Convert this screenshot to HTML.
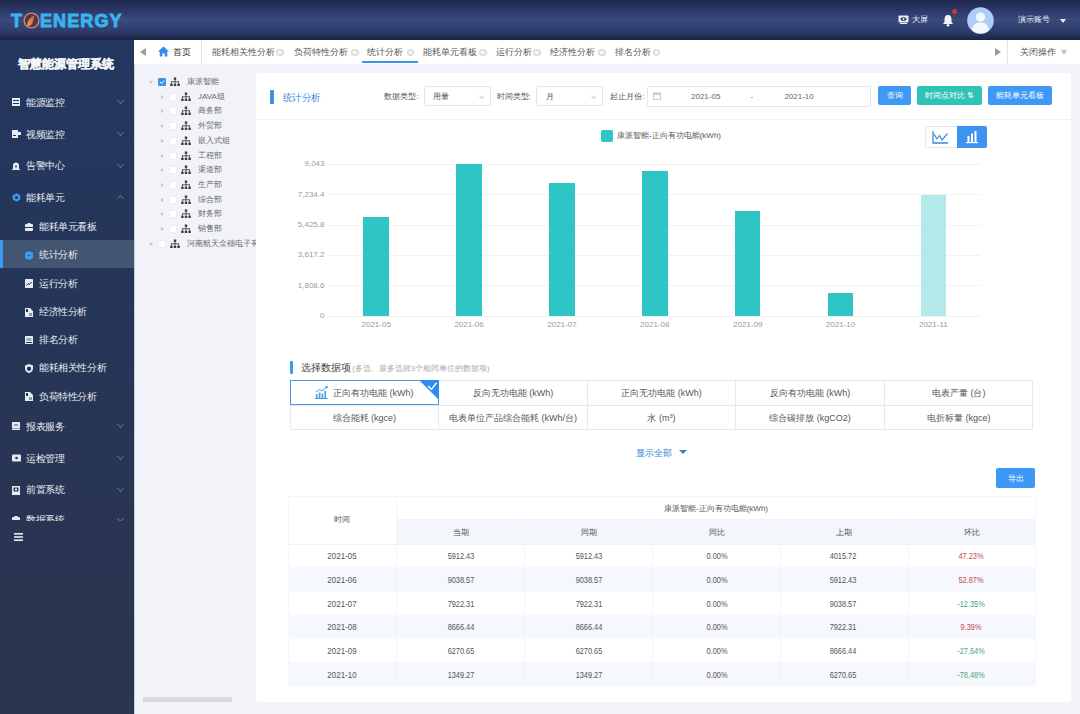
<!DOCTYPE html><html><head><meta charset="utf-8"><style>
*{margin:0;padding:0;box-sizing:border-box}
html,body{width:1080px;height:714px;overflow:hidden}
body{position:relative;background:#f2f3f8;font-family:"Liberation Sans",sans-serif;color:#333}
.a{position:absolute;white-space:nowrap}
#hdr{left:0;top:0;width:1080px;height:40px;background:linear-gradient(180deg,#1f294d 0%,#2a3866 25%,#3a4a7d 50%,#2e3c6b 78%,#1b2343 100%)}
#side{left:0;top:40px;width:134px;height:674px;background:linear-gradient(180deg,#24375e 0%,#25365a 30%,#283554 60%,#2a354f 100%)}
.mi{left:0;width:134px;height:20px;color:#e8ecf3;font-size:10px;line-height:20px}
.mi .t{top:1.2px!important;transform:scale(0.96);transform-origin:0 50%}
.mi .t{position:absolute;left:26px;top:0}
.mi svg{position:absolute;left:12px;top:6.5px}
.chev{position:absolute;left:118px;top:6.5px;width:5px;height:5px;border-right:1px solid #5d6d8c;border-bottom:1px solid #5d6d8c;transform:rotate(45deg)}
.chev.up{transform:rotate(-135deg);top:9px}
.si .t{left:39px}
.si svg{left:25px}
#tabs{left:134px;top:40px;width:946px;height:24px;background:#fff}
.tab{top:40px;height:24px;line-height:24px;font-size:9px;color:#555}
.x{position:absolute;top:8.5px;width:7.5px;height:7.5px;border-radius:50%;border:1px solid #cfcfcf;background:#ececec}
.x:after{content:'';position:absolute;left:1.2px;top:1.2px;width:3px;height:3px;border-radius:50%;background:#fafafa}
#card{left:256px;top:73px;width:815px;height:629px;background:#fff;border-radius:3px}
.tree{height:14px;line-height:14px;font-size:8px;color:#6a6a6a}
.cb{position:absolute;width:8px;height:8px;border:1px solid #eceef2;background:#fff;border-radius:1px}
.caret{position:absolute;width:0;height:0;border-top:2px solid transparent;border-bottom:2px solid transparent;border-left:3px solid #c0c4cc}
</style></head><body>
<div id="hdr" class="a"></div>
<div class="a" style="left:11px;top:11.5px;font-size:18px;line-height:18px;font-weight:bold;color:#3ab6f0;-webkit-text-stroke:0.9px #39b3ee;letter-spacing:0.2px">T</div>
<svg class="a" style="left:23px;top:12px" width="17" height="17" viewBox="0 0 17 17"><defs><linearGradient id="fl" x1="0" y1="1" x2="1" y2="0"><stop offset="0" stop-color="#f0a060"/><stop offset="1" stop-color="#c25a3a"/></linearGradient></defs><circle cx="8.5" cy="8.5" r="7.4" fill="#5a3440" stroke="#c78a84" stroke-width="1.3"/><path d="M4.5 14 C4 10 6 6 11.5 3 C10.5 6 11 9 8.5 12.5 C7.5 13.5 6 14 4.5 14 Z" fill="url(#fl)"/></svg>
<div class="a" style="left:40px;top:11.5px;font-size:18px;line-height:18px;font-weight:bold;color:#3ab6f0;-webkit-text-stroke:0.9px #39b3ee;letter-spacing:1.1px">ENERGY</div>
<svg class="a" style="left:898px;top:15px" width="11" height="9" viewBox="0 0 11 9"><rect x="0.5" y="0.5" width="10" height="7" rx="1" fill="#e8ecf5"/><ellipse cx="5.5" cy="4" rx="3" ry="1.8" fill="#2c3868"/><circle cx="5.5" cy="4" r="1" fill="#e8ecf5"/><rect x="2" y="8" width="7" height="1" fill="#e8ecf5"/></svg>
<div class="a" style="left:912px;top:14px;font-size:8px;line-height:12px;color:#eef1f7">大屏</div>
<svg class="a" style="left:942px;top:14px" width="12" height="13" viewBox="0 0 12 13"><path d="M6 1 C3.5 1 2.5 3 2.5 5 L2.5 8 L1 10 L11 10 L9.5 8 L9.5 5 C9.5 3 8.5 1 6 1 Z" fill="#f2f4f8"/><circle cx="6" cy="11.3" r="1.3" fill="#f2f4f8"/></svg>
<div class="a" style="left:952px;top:9px;width:5px;height:5px;border-radius:50%;background:#e8293a"></div>
<svg class="a" style="left:967px;top:7px" width="27" height="27" viewBox="0 0 27 27"><circle cx="13.5" cy="13.5" r="13.3" fill="#aecdf2"/><circle cx="13.5" cy="10" r="4.6" fill="#f4f8fe"/><path d="M5 23 C6 17 9 15.5 13.5 15.5 C18 15.5 21 17 22 23 C19.5 25.5 16.5 26.5 13.5 26.5 C10.5 26.5 7.5 25.5 5 23 Z" fill="#f4f8fe"/></svg>
<div class="a" style="left:1018px;top:14px;font-size:8px;line-height:12px;color:#eef1f7">演示账号</div>
<div class="a" style="left:1060px;top:19px;width:0;height:0;border-left:3px solid transparent;border-right:3px solid transparent;border-top:4px solid #e8ecf5"></div>
<div id="side" class="a"></div>
<div class="a" style="left:17.5px;top:56px;font-size:12.35px;line-height:16px;font-weight:bold;color:#f3f5f9;-webkit-text-stroke:0.35px #f3f5f9">智慧能源管理系统</div>
<div class="a mi" style="top:91.8px"><svg width="8" height="8" viewBox="0 0 8 8"><rect x="0" y="0" width="8" height="8" fill="#e6eaf1"/><rect x="1" y="2" width="6" height="1" fill="#243454"/><rect x="1" y="5" width="6" height="1" fill="#243454"/></svg><span class="t">能源监控</span><i class="chev"></i></div>
<div class="a mi" style="top:123.6px"><svg width="9" height="8" viewBox="0 0 9 8"><rect x="0" y="0" width="6" height="8" fill="#e6eaf1"/><rect x="6" y="2" width="3" height="3" fill="#e6eaf1"/><rect x="1" y="5" width="3" height="1" fill="#243454"/></svg><span class="t">视频监控</span><i class="chev"></i></div>
<div class="a mi" style="top:155.3px"><svg width="8" height="8" viewBox="0 0 8 8"><path d="M1 7 L1 3.5 C1 1.5 2.5 0.5 4 0.5 C5.5 0.5 7 1.5 7 3.5 L7 7 Z" fill="#e6eaf1"/><rect x="0" y="7" width="8" height="1" fill="#e6eaf1"/><circle cx="4" cy="4.5" r="1" fill="#243454"/></svg><span class="t">告警中心</span><i class="chev"></i></div>
<div class="a mi" style="top:186.6px"><svg width="9" height="9" viewBox="0 0 9 9"><path d="M4.5 0.3 L8.3 2.4 L8.3 6.6 L4.5 8.7 L0.7 6.6 L0.7 2.4 Z" fill="#3a9cf0"/><circle cx="4.5" cy="4.5" r="1.6" fill="#243454"/></svg><span class="t">能耗单元</span><i class="chev up"></i></div>
<div class="a mi si" style="top:216.1px"><svg width="8" height="8" viewBox="0 0 8 8"><rect x="0" y="1" width="8" height="7" rx="1" fill="#e6eaf1"/><rect x="2.5" y="0" width="3" height="2" fill="#e6eaf1"/><rect x="0" y="4" width="8" height="1" fill="#243454"/></svg><span class="t">能耗单元看板</span></div>
<div class="a" style="left:0;top:240px;width:134px;height:28px;background:#425571"></div>
<div class="a" style="left:0;top:240px;width:3px;height:28px;background:#3b9bf2"></div>
<div class="a mi si" style="top:244.2px"><svg width="8" height="9" viewBox="0 0 8 9"><rect x="0" y="0.5" width="8" height="8" rx="3" fill="#3a9cf0"/><rect x="2" y="4" width="4" height="1" fill="#2a6cc0"/></svg><span class="t">统计分析</span></div>
<div class="a mi si" style="top:272.7px"><svg width="8" height="9" viewBox="0 0 8 9"><rect x="0" y="0" width="8" height="9" rx="0.5" fill="#e6eaf1"/><path d="M1.5 6.5 L3 4.5 L4.5 5.5 L6.5 3" stroke="#243454" stroke-width="1" fill="none"/></svg><span class="t">运行分析</span></div>
<div class="a mi si" style="top:301.3px"><svg width="8" height="9" viewBox="0 0 8 9"><path d="M0 0 L5 0 L8 3 L8 9 L0 9 Z" fill="#e6eaf1"/><rect x="1" y="1" width="2" height="3" fill="#243454"/><rect x="4" y="5" width="3" height="3" fill="#8a98b0"/></svg><span class="t">经济性分析</span></div>
<div class="a mi si" style="top:329.1px"><svg width="8" height="8" viewBox="0 0 8 8"><rect x="0" y="0" width="8" height="8" rx="0.5" fill="#e6eaf1"/><rect x="1.5" y="2" width="5" height="3" fill="#9aa6bb"/><rect x="1" y="6" width="6" height="1" fill="#243454"/></svg><span class="t">排名分析</span></div>
<div class="a mi si" style="top:357.1px"><svg width="8" height="9" viewBox="0 0 8 9"><path d="M4 0 L8 1.5 L8 4.5 C8 7 6 8.5 4 9 C2 8.5 0 7 0 4.5 L0 1.5 Z" fill="#e6eaf1"/><path d="M4 2.5 L6 3.5 L6 5 C6 6 5 6.6 4 7 C3 6.6 2 6 2 5 L2 3.5 Z" fill="#243454"/></svg><span class="t">能耗相关性分析</span></div>
<div class="a mi si" style="top:385.4px"><svg width="8" height="9" viewBox="0 0 8 9"><path d="M0 0 L5 0 L8 3 L8 9 L0 9 Z" fill="#e6eaf1"/><rect x="1" y="1" width="2" height="3" fill="#243454"/><rect x="4" y="5" width="3" height="3" fill="#8a98b0"/></svg><span class="t">负荷特性分析</span></div>
<div class="a mi" style="top:415.9px"><svg width="8" height="8" viewBox="0 0 8 8"><rect x="0" y="0" width="8" height="8" rx="0.5" fill="#e6eaf1"/><rect x="2" y="2" width="4" height="2" fill="#8a98b0"/><rect x="0" y="6" width="8" height="1" fill="#8a98b0"/></svg><span class="t">报表服务</span><i class="chev"></i></div>
<div class="a mi" style="top:447.4px"><svg width="9" height="8" viewBox="0 0 9 8"><rect x="0" y="0.5" width="9" height="7" rx="1" fill="#e6eaf1"/><circle cx="4.5" cy="4" r="1.3" fill="#243454"/></svg><span class="t">运检管理</span><i class="chev"></i></div>
<div class="a mi" style="top:479.3px"><svg width="8" height="9" viewBox="0 0 8 9"><rect x="0" y="0" width="8" height="9" fill="#e6eaf1"/><rect x="1.5" y="1.5" width="5" height="4" fill="#243454"/><rect x="3" y="2.5" width="2" height="2" fill="#e6eaf1"/></svg><span class="t">前置系统</span><i class="chev"></i></div>
<div class="a" style="left:0;top:515px;width:134px;height:6px;overflow:hidden"><div class="a mi" style="top:-6px"><svg width="8" height="8" viewBox="0 0 8 8"><rect x="0" y="1" width="8" height="7" rx="1" fill="#e6eaf1"/><rect x="2.5" y="0" width="3" height="2" fill="#e6eaf1"/><rect x="0" y="4" width="8" height="1" fill="#243454"/></svg><span class="t">数据系统</span><i class="chev"></i></div></div>
<svg class="a" style="left:14px;top:533px" width="9" height="8" viewBox="0 0 9 8"><rect x="0" y="0" width="9" height="1.6" fill="#e6eaf1"/><rect x="0" y="3.2" width="9" height="1.6" fill="#e6eaf1"/><rect x="0" y="6.4" width="9" height="1.6" fill="#e6eaf1"/></svg>
<div id="tabs" class="a"></div>
<div class="a" style="left:140px;top:48px;width:0;height:0;border-top:4px solid transparent;border-bottom:4px solid transparent;border-right:6px solid #9a9a9a"></div>
<svg class="a" style="left:158px;top:46px" width="11" height="11" viewBox="0 0 11 11"><path d="M5.5 0.5 L11 5.5 L9.3 5.5 L9.3 10.5 L6.7 10.5 L6.7 7.5 L4.3 7.5 L4.3 10.5 L1.7 10.5 L1.7 5.5 L0 5.5 Z" fill="#2f8ef0"/></svg>
<div class="a tab" style="left:173px;color:#333">首页</div>
<div class="a" style="left:201px;top:40px;width:1px;height:24px;background:#e6e6e6"></div>
<div class="a tab" style="left:212px">能耗相关性分析</div>
<i class="x a" style="left:276px;top:48.5px"></i>
<div class="a tab" style="left:294px">负荷特性分析</div>
<i class="x a" style="left:351px;top:48.5px"></i>
<div class="a tab" style="left:367px">统计分析</div>
<i class="x a" style="left:406.5px;top:48.5px"></i>
<div class="a tab" style="left:423px">能耗单元看板</div>
<i class="x a" style="left:479px;top:48.5px"></i>
<div class="a tab" style="left:496px">运行分析</div>
<i class="x a" style="left:533px;top:48.5px"></i>
<div class="a tab" style="left:550px">经济性分析</div>
<i class="x a" style="left:598px;top:48.5px"></i>
<div class="a tab" style="left:615px">排名分析</div>
<i class="x a" style="left:652.5px;top:48.5px"></i>
<div class="a" style="left:362px;top:61px;width:56px;height:2px;background:#3d93e8"></div>
<div class="a" style="left:995px;top:48px;width:0;height:0;border-top:4px solid transparent;border-bottom:4px solid transparent;border-left:6px solid #9a9a9a"></div>
<div class="a" style="left:1007px;top:40px;width:1px;height:24px;background:#e6e6e6"></div>
<div class="a tab" style="left:1020px">关闭操作</div>
<div class="a" style="left:1061px;top:50px;width:0;height:0;border-left:3px solid transparent;border-right:3px solid transparent;border-top:5px solid #c0c0c0"></div>
<div class="a" style="left:134px;top:64px;width:122px;height:650px;overflow:hidden">
<div class="a tree" style="left:0;top:11.00px;width:200px"><i class="a" style="left:15px;top:6px;width:0;height:0;border-left:2px solid transparent;border-right:2px solid transparent;border-top:3px solid #c0c4cc"></i><i class="cb" style="left:24px;top:3px;background:#3b95ef;border-color:#3b95ef"></i><svg class="a" style="left:25px;top:4px" width="6" height="6" viewBox="0 0 6 6"><path d="M1 3 L2.5 4.5 L5 1.5" stroke="#fff" stroke-width="1" fill="none"/></svg><svg class="a" style="left:36px;top:2px" width="10" height="10" viewBox="0 0 10 10"><rect x="3.8" y="0.5" width="2.4" height="2.4" fill="#3a3a3a"/><rect x="4.6" y="2.9" width="0.8" height="2" fill="#3a3a3a"/><rect x="1.2" y="4.4" width="7.6" height="0.8" fill="#3a3a3a"/><rect x="1.2" y="4.4" width="0.8" height="2" fill="#3a3a3a"/><rect x="4.6" y="4.4" width="0.8" height="2" fill="#3a3a3a"/><rect x="8" y="4.4" width="0.8" height="2" fill="#3a3a3a"/><rect x="0.2" y="6.6" width="2.4" height="2.4" fill="#3a3a3a"/><rect x="3.8" y="6.6" width="2.4" height="2.4" fill="#3a3a3a"/><rect x="7.4" y="6.6" width="2.4" height="2.4" fill="#3a3a3a"/></svg><span class="a" style="left:53px;top:0">康派智能</span></div>
<div class="a tree" style="left:0;top:25.72px;width:200px"><i class="caret" style="left:27px;top:5px"></i><i class="cb" style="left:35px;top:3px"></i><svg class="a" style="left:47px;top:2px" width="10" height="10" viewBox="0 0 10 10"><rect x="3.8" y="0.5" width="2.4" height="2.4" fill="#3a3a3a"/><rect x="4.6" y="2.9" width="0.8" height="2" fill="#3a3a3a"/><rect x="1.2" y="4.4" width="7.6" height="0.8" fill="#3a3a3a"/><rect x="1.2" y="4.4" width="0.8" height="2" fill="#3a3a3a"/><rect x="4.6" y="4.4" width="0.8" height="2" fill="#3a3a3a"/><rect x="8" y="4.4" width="0.8" height="2" fill="#3a3a3a"/><rect x="0.2" y="6.6" width="2.4" height="2.4" fill="#3a3a3a"/><rect x="3.8" y="6.6" width="2.4" height="2.4" fill="#3a3a3a"/><rect x="7.4" y="6.6" width="2.4" height="2.4" fill="#3a3a3a"/></svg><span class="a" style="left:64px;top:0">JAVA组</span></div>
<div class="a tree" style="left:0;top:40.44px;width:200px"><i class="caret" style="left:27px;top:5px"></i><i class="cb" style="left:35px;top:3px"></i><svg class="a" style="left:47px;top:2px" width="10" height="10" viewBox="0 0 10 10"><rect x="3.8" y="0.5" width="2.4" height="2.4" fill="#3a3a3a"/><rect x="4.6" y="2.9" width="0.8" height="2" fill="#3a3a3a"/><rect x="1.2" y="4.4" width="7.6" height="0.8" fill="#3a3a3a"/><rect x="1.2" y="4.4" width="0.8" height="2" fill="#3a3a3a"/><rect x="4.6" y="4.4" width="0.8" height="2" fill="#3a3a3a"/><rect x="8" y="4.4" width="0.8" height="2" fill="#3a3a3a"/><rect x="0.2" y="6.6" width="2.4" height="2.4" fill="#3a3a3a"/><rect x="3.8" y="6.6" width="2.4" height="2.4" fill="#3a3a3a"/><rect x="7.4" y="6.6" width="2.4" height="2.4" fill="#3a3a3a"/></svg><span class="a" style="left:64px;top:0">商务部</span></div>
<div class="a tree" style="left:0;top:55.16px;width:200px"><i class="caret" style="left:27px;top:5px"></i><i class="cb" style="left:35px;top:3px"></i><svg class="a" style="left:47px;top:2px" width="10" height="10" viewBox="0 0 10 10"><rect x="3.8" y="0.5" width="2.4" height="2.4" fill="#3a3a3a"/><rect x="4.6" y="2.9" width="0.8" height="2" fill="#3a3a3a"/><rect x="1.2" y="4.4" width="7.6" height="0.8" fill="#3a3a3a"/><rect x="1.2" y="4.4" width="0.8" height="2" fill="#3a3a3a"/><rect x="4.6" y="4.4" width="0.8" height="2" fill="#3a3a3a"/><rect x="8" y="4.4" width="0.8" height="2" fill="#3a3a3a"/><rect x="0.2" y="6.6" width="2.4" height="2.4" fill="#3a3a3a"/><rect x="3.8" y="6.6" width="2.4" height="2.4" fill="#3a3a3a"/><rect x="7.4" y="6.6" width="2.4" height="2.4" fill="#3a3a3a"/></svg><span class="a" style="left:64px;top:0">外贸部</span></div>
<div class="a tree" style="left:0;top:69.88px;width:200px"><i class="caret" style="left:27px;top:5px"></i><i class="cb" style="left:35px;top:3px"></i><svg class="a" style="left:47px;top:2px" width="10" height="10" viewBox="0 0 10 10"><rect x="3.8" y="0.5" width="2.4" height="2.4" fill="#3a3a3a"/><rect x="4.6" y="2.9" width="0.8" height="2" fill="#3a3a3a"/><rect x="1.2" y="4.4" width="7.6" height="0.8" fill="#3a3a3a"/><rect x="1.2" y="4.4" width="0.8" height="2" fill="#3a3a3a"/><rect x="4.6" y="4.4" width="0.8" height="2" fill="#3a3a3a"/><rect x="8" y="4.4" width="0.8" height="2" fill="#3a3a3a"/><rect x="0.2" y="6.6" width="2.4" height="2.4" fill="#3a3a3a"/><rect x="3.8" y="6.6" width="2.4" height="2.4" fill="#3a3a3a"/><rect x="7.4" y="6.6" width="2.4" height="2.4" fill="#3a3a3a"/></svg><span class="a" style="left:64px;top:0">嵌入式组</span></div>
<div class="a tree" style="left:0;top:84.60px;width:200px"><i class="caret" style="left:27px;top:5px"></i><i class="cb" style="left:35px;top:3px"></i><svg class="a" style="left:47px;top:2px" width="10" height="10" viewBox="0 0 10 10"><rect x="3.8" y="0.5" width="2.4" height="2.4" fill="#3a3a3a"/><rect x="4.6" y="2.9" width="0.8" height="2" fill="#3a3a3a"/><rect x="1.2" y="4.4" width="7.6" height="0.8" fill="#3a3a3a"/><rect x="1.2" y="4.4" width="0.8" height="2" fill="#3a3a3a"/><rect x="4.6" y="4.4" width="0.8" height="2" fill="#3a3a3a"/><rect x="8" y="4.4" width="0.8" height="2" fill="#3a3a3a"/><rect x="0.2" y="6.6" width="2.4" height="2.4" fill="#3a3a3a"/><rect x="3.8" y="6.6" width="2.4" height="2.4" fill="#3a3a3a"/><rect x="7.4" y="6.6" width="2.4" height="2.4" fill="#3a3a3a"/></svg><span class="a" style="left:64px;top:0">工程部</span></div>
<div class="a tree" style="left:0;top:99.32px;width:200px"><i class="caret" style="left:27px;top:5px"></i><i class="cb" style="left:35px;top:3px"></i><svg class="a" style="left:47px;top:2px" width="10" height="10" viewBox="0 0 10 10"><rect x="3.8" y="0.5" width="2.4" height="2.4" fill="#3a3a3a"/><rect x="4.6" y="2.9" width="0.8" height="2" fill="#3a3a3a"/><rect x="1.2" y="4.4" width="7.6" height="0.8" fill="#3a3a3a"/><rect x="1.2" y="4.4" width="0.8" height="2" fill="#3a3a3a"/><rect x="4.6" y="4.4" width="0.8" height="2" fill="#3a3a3a"/><rect x="8" y="4.4" width="0.8" height="2" fill="#3a3a3a"/><rect x="0.2" y="6.6" width="2.4" height="2.4" fill="#3a3a3a"/><rect x="3.8" y="6.6" width="2.4" height="2.4" fill="#3a3a3a"/><rect x="7.4" y="6.6" width="2.4" height="2.4" fill="#3a3a3a"/></svg><span class="a" style="left:64px;top:0">渠道部</span></div>
<div class="a tree" style="left:0;top:114.04px;width:200px"><i class="caret" style="left:27px;top:5px"></i><i class="cb" style="left:35px;top:3px"></i><svg class="a" style="left:47px;top:2px" width="10" height="10" viewBox="0 0 10 10"><rect x="3.8" y="0.5" width="2.4" height="2.4" fill="#3a3a3a"/><rect x="4.6" y="2.9" width="0.8" height="2" fill="#3a3a3a"/><rect x="1.2" y="4.4" width="7.6" height="0.8" fill="#3a3a3a"/><rect x="1.2" y="4.4" width="0.8" height="2" fill="#3a3a3a"/><rect x="4.6" y="4.4" width="0.8" height="2" fill="#3a3a3a"/><rect x="8" y="4.4" width="0.8" height="2" fill="#3a3a3a"/><rect x="0.2" y="6.6" width="2.4" height="2.4" fill="#3a3a3a"/><rect x="3.8" y="6.6" width="2.4" height="2.4" fill="#3a3a3a"/><rect x="7.4" y="6.6" width="2.4" height="2.4" fill="#3a3a3a"/></svg><span class="a" style="left:64px;top:0">生产部</span></div>
<div class="a tree" style="left:0;top:128.76px;width:200px"><i class="caret" style="left:27px;top:5px"></i><i class="cb" style="left:35px;top:3px"></i><svg class="a" style="left:47px;top:2px" width="10" height="10" viewBox="0 0 10 10"><rect x="3.8" y="0.5" width="2.4" height="2.4" fill="#3a3a3a"/><rect x="4.6" y="2.9" width="0.8" height="2" fill="#3a3a3a"/><rect x="1.2" y="4.4" width="7.6" height="0.8" fill="#3a3a3a"/><rect x="1.2" y="4.4" width="0.8" height="2" fill="#3a3a3a"/><rect x="4.6" y="4.4" width="0.8" height="2" fill="#3a3a3a"/><rect x="8" y="4.4" width="0.8" height="2" fill="#3a3a3a"/><rect x="0.2" y="6.6" width="2.4" height="2.4" fill="#3a3a3a"/><rect x="3.8" y="6.6" width="2.4" height="2.4" fill="#3a3a3a"/><rect x="7.4" y="6.6" width="2.4" height="2.4" fill="#3a3a3a"/></svg><span class="a" style="left:64px;top:0">综合部</span></div>
<div class="a tree" style="left:0;top:143.48px;width:200px"><i class="caret" style="left:27px;top:5px"></i><i class="cb" style="left:35px;top:3px"></i><svg class="a" style="left:47px;top:2px" width="10" height="10" viewBox="0 0 10 10"><rect x="3.8" y="0.5" width="2.4" height="2.4" fill="#3a3a3a"/><rect x="4.6" y="2.9" width="0.8" height="2" fill="#3a3a3a"/><rect x="1.2" y="4.4" width="7.6" height="0.8" fill="#3a3a3a"/><rect x="1.2" y="4.4" width="0.8" height="2" fill="#3a3a3a"/><rect x="4.6" y="4.4" width="0.8" height="2" fill="#3a3a3a"/><rect x="8" y="4.4" width="0.8" height="2" fill="#3a3a3a"/><rect x="0.2" y="6.6" width="2.4" height="2.4" fill="#3a3a3a"/><rect x="3.8" y="6.6" width="2.4" height="2.4" fill="#3a3a3a"/><rect x="7.4" y="6.6" width="2.4" height="2.4" fill="#3a3a3a"/></svg><span class="a" style="left:64px;top:0">财务部</span></div>
<div class="a tree" style="left:0;top:158.20px;width:200px"><i class="caret" style="left:27px;top:5px"></i><i class="cb" style="left:35px;top:3px"></i><svg class="a" style="left:47px;top:2px" width="10" height="10" viewBox="0 0 10 10"><rect x="3.8" y="0.5" width="2.4" height="2.4" fill="#3a3a3a"/><rect x="4.6" y="2.9" width="0.8" height="2" fill="#3a3a3a"/><rect x="1.2" y="4.4" width="7.6" height="0.8" fill="#3a3a3a"/><rect x="1.2" y="4.4" width="0.8" height="2" fill="#3a3a3a"/><rect x="4.6" y="4.4" width="0.8" height="2" fill="#3a3a3a"/><rect x="8" y="4.4" width="0.8" height="2" fill="#3a3a3a"/><rect x="0.2" y="6.6" width="2.4" height="2.4" fill="#3a3a3a"/><rect x="3.8" y="6.6" width="2.4" height="2.4" fill="#3a3a3a"/><rect x="7.4" y="6.6" width="2.4" height="2.4" fill="#3a3a3a"/></svg><span class="a" style="left:64px;top:0">销售部</span></div>
<div class="a tree" style="left:0;top:172.92px;width:200px"><i class="caret" style="left:16px;top:5px"></i><i class="cb" style="left:24px;top:3px"></i><svg class="a" style="left:36px;top:2px" width="10" height="10" viewBox="0 0 10 10"><rect x="3.8" y="0.5" width="2.4" height="2.4" fill="#3a3a3a"/><rect x="4.6" y="2.9" width="0.8" height="2" fill="#3a3a3a"/><rect x="1.2" y="4.4" width="7.6" height="0.8" fill="#3a3a3a"/><rect x="1.2" y="4.4" width="0.8" height="2" fill="#3a3a3a"/><rect x="4.6" y="4.4" width="0.8" height="2" fill="#3a3a3a"/><rect x="8" y="4.4" width="0.8" height="2" fill="#3a3a3a"/><rect x="0.2" y="6.6" width="2.4" height="2.4" fill="#3a3a3a"/><rect x="3.8" y="6.6" width="2.4" height="2.4" fill="#3a3a3a"/><rect x="7.4" y="6.6" width="2.4" height="2.4" fill="#3a3a3a"/></svg><span class="a" style="left:53px;top:0">河南航天金穗电子有限公司</span></div>
</div>
<div class="a" style="left:134px;top:64px;width:1px;height:650px;background:#c9d0df"></div>
<div class="a" style="left:143px;top:697px;width:89px;height:4.5px;background:#d9d9dc"></div>
<div id="card" class="a"></div>
<div class="a" style="left:270px;top:89.5px;width:4px;height:14.5px;background:#3f8fe6;border-radius:1px"></div>
<div class="a" style="left:282.5px;top:91.80px;font-size:10px;line-height:12px;color:#3b84d6;transform:scaleX(0.94);transform-origin:0 50%">统计分析</div>
<div class="a" style="left:256px;top:119px;width:815px;height:1px;background:#eef0f4"></div>
<div class="a" style="left:384.4px;top:90.70px;font-size:8px;line-height:12px;color:#555;">数据类型:</div>
<div class="a" style="left:424px;top:86px;width:66.5px;height:20px;border:1px solid #e3e6ec;border-radius:2px;background:#fff"></div>
<div class="a" style="left:433px;top:91.20px;font-size:8px;line-height:12px;color:#555;">用量</div>
<i class="a" style="left:480px;top:93.5px;width:3.5px;height:3.5px;border-right:1px solid #c8cbd2;border-bottom:1px solid #c8cbd2;transform:rotate(45deg)"></i>
<div class="a" style="left:496.6px;top:90.70px;font-size:8px;line-height:12px;color:#555;">时间类型:</div>
<div class="a" style="left:536px;top:86px;width:67px;height:20px;border:1px solid #e3e6ec;border-radius:2px;background:#fff"></div>
<div class="a" style="left:546px;top:91.20px;font-size:8px;line-height:12px;color:#555;">月</div>
<i class="a" style="left:592px;top:93.5px;width:3.5px;height:3.5px;border-right:1px solid #c8cbd2;border-bottom:1px solid #c8cbd2;transform:rotate(45deg)"></i>
<div class="a" style="left:610px;top:90.70px;font-size:8px;line-height:12px;color:#555;">起止月份:</div>
<div class="a" style="left:647px;top:86px;width:224px;height:21px;border:1px solid #e3e6ec;border-radius:2px;background:#fff"></div>
<svg class="a" style="left:653px;top:92px" width="8" height="8" viewBox="0 0 8 8"><rect x="0.5" y="1" width="7" height="6.5" fill="none" stroke="#c8cbd2" stroke-width="1"/><rect x="0.5" y="1" width="7" height="2" fill="#c8cbd2"/></svg>
<div class="a" style="left:691px;top:90.50px;font-size:8px;line-height:12px;color:#666;">2021-05</div>
<div class="a" style="left:750.5px;top:90.50px;font-size:8px;line-height:12px;color:#666;">-</div>
<div class="a" style="left:784.4px;top:90.50px;font-size:8px;line-height:12px;color:#666;">2021-10</div>
<div class="a" style="left:878px;top:86px;width:33px;height:19px;background:#3d99f5;border-radius:2px"></div>
<div class="a" style="left:794.50px;top:90.30px;width:200px;text-align:center;font-size:8px;line-height:12px;color:#fff;">查询</div>
<div class="a" style="left:917px;top:86px;width:64.5px;height:19px;background:#2fc3b5;border-radius:2px"></div>
<div class="a" style="left:849.25px;top:90.30px;width:200px;text-align:center;font-size:8px;line-height:12px;color:#fff;">时间点对比 &#8645;</div>
<div class="a" style="left:988px;top:86px;width:64px;height:19px;background:#3d99f5;border-radius:2px"></div>
<div class="a" style="left:920.00px;top:90.30px;width:200px;text-align:center;font-size:8px;line-height:12px;color:#fff;">能耗单元看板</div>
<div class="a" style="left:601px;top:129.5px;width:12px;height:12.0px;background:#2fc5c7;border-radius:2px"></div>
<div class="a" style="left:617px;top:129.50px;font-size:8px;line-height:12px;color:#555;">康派智能-正向有功电能(kWh)</div>
<div class="a" style="left:925px;top:126px;width:32px;height:22px;border:1px solid #e6e8ec;border-right:none;border-radius:2px 0 0 2px;background:#fff"></div>
<svg class="a" style="left:932px;top:130px" width="17" height="14" viewBox="0 0 17 14"><path d="M1 1 L1 13 L16 13" stroke="#3a8ad8" stroke-width="1.3" fill="none"/><path d="M2 4 L5 9 L7.5 5.5 L10 10 L15.5 3.5" stroke="#3a8ad8" stroke-width="1.2" fill="none"/></svg>
<div class="a" style="left:957px;top:126px;width:30px;height:22px;background:#3e93f0;border-radius:0 2px 2px 0"></div>
<svg class="a" style="left:965px;top:130px" width="14" height="14" viewBox="0 0 14 14"><rect x="2.5" y="6" width="2" height="6" fill="#fff"/><rect x="6" y="3.5" width="2" height="8.5" fill="#fff"/><rect x="9.5" y="1" width="2" height="11" fill="#fff"/><rect x="1" y="12" width="12" height="1.2" fill="#fff"/></svg>
<div class="a" style="left:328px;top:315.6px;width:652px;height:1.0px;background:#f0f2f5"></div>
<div class="a" style="left:264.50px;top:310.10px;width:60px;text-align:right;font-size:8px;line-height:12px;color:#9a9a9a;">0</div>
<div class="a" style="left:328px;top:285.3px;width:652px;height:1.0px;background:#f0f2f5"></div>
<div class="a" style="left:264.50px;top:279.76px;width:60px;text-align:right;font-size:8px;line-height:12px;color:#9a9a9a;">1,808.6</div>
<div class="a" style="left:328px;top:254.9px;width:652px;height:1.0px;background:#f0f2f5"></div>
<div class="a" style="left:264.50px;top:249.42px;width:60px;text-align:right;font-size:8px;line-height:12px;color:#9a9a9a;">3,617.2</div>
<div class="a" style="left:328px;top:224.6px;width:652px;height:1.0px;background:#f0f2f5"></div>
<div class="a" style="left:264.50px;top:219.08px;width:60px;text-align:right;font-size:8px;line-height:12px;color:#9a9a9a;">5,425.8</div>
<div class="a" style="left:328px;top:194.2px;width:652px;height:1.0px;background:#f0f2f5"></div>
<div class="a" style="left:264.50px;top:188.74px;width:60px;text-align:right;font-size:8px;line-height:12px;color:#9a9a9a;">7,234.4</div>
<div class="a" style="left:328px;top:163.9px;width:652px;height:1.0px;background:#f0f2f5"></div>
<div class="a" style="left:264.50px;top:158.40px;width:60px;text-align:right;font-size:8px;line-height:12px;color:#9a9a9a;">9,043</div>
<div class="a" style="left:363.45px;top:216.92px;width:25.5px;height:99.18000000000004px;background:#2fc5c7"></div>
<div class="a" style="left:346.20px;top:319.20px;width:60px;text-align:center;font-size:8px;line-height:12px;color:#9a9a9a;">2021-05</div>
<div class="a" style="left:456.32px;top:164.47px;width:25.5px;height:151.63000000000002px;background:#2fc5c7"></div>
<div class="a" style="left:439.07px;top:319.20px;width:60px;text-align:center;font-size:8px;line-height:12px;color:#9a9a9a;">2021-06</div>
<div class="a" style="left:549.19px;top:183.2px;width:25.5px;height:132.90000000000003px;background:#2fc5c7"></div>
<div class="a" style="left:531.94px;top:319.20px;width:60px;text-align:center;font-size:8px;line-height:12px;color:#9a9a9a;">2021-07</div>
<div class="a" style="left:642.06px;top:170.72px;width:25.5px;height:145.38000000000002px;background:#2fc5c7"></div>
<div class="a" style="left:624.81px;top:319.20px;width:60px;text-align:center;font-size:8px;line-height:12px;color:#9a9a9a;">2021-08</div>
<div class="a" style="left:734.93px;top:210.91px;width:25.5px;height:105.19000000000003px;background:#2fc5c7"></div>
<div class="a" style="left:717.68px;top:319.20px;width:60px;text-align:center;font-size:8px;line-height:12px;color:#9a9a9a;">2021-09</div>
<div class="a" style="left:827.8px;top:293.47px;width:25.5px;height:22.629999999999995px;background:#2fc5c7"></div>
<div class="a" style="left:810.55px;top:319.20px;width:60px;text-align:center;font-size:8px;line-height:12px;color:#9a9a9a;">2021-10</div>
<div class="a" style="left:920.67px;top:194.74px;width:25.5px;height:121.36000000000001px;background:#b3e9ea"></div>
<div class="a" style="left:903.42px;top:319.20px;width:60px;text-align:center;font-size:8px;line-height:12px;color:#9a9a9a;">2021-11</div>
<div class="a" style="left:290px;top:361px;width:2.5px;height:12.5px;background:#3d99f5;border-radius:1px"></div>
<div class="a" style="left:301.4px;top:362.30px;font-size:9.5px;line-height:12px;color:#444;">选择数据项</div>
<div class="a" style="left:352.3px;top:362.80px;font-size:7.6px;line-height:12px;color:#aaa;">(多选、最多选择3个相同单位的数据项)</div>
<div class="a" style="left:290px;top:380px;width:743px;height:50px;border:1px solid #e6e8ec;background:#fff"></div>
<div class="a" style="left:290px;top:404.5px;width:743px;height:1.0px;background:#e6e8ec"></div>
<div class="a" style="left:438.1px;top:380px;width:1.0px;height:50px;background:#e6e8ec"></div>
<div class="a" style="left:586.7px;top:380px;width:1.0px;height:50px;background:#e6e8ec"></div>
<div class="a" style="left:735.3px;top:380px;width:1.0px;height:50px;background:#e6e8ec"></div>
<div class="a" style="left:883.9px;top:380px;width:1.0px;height:50px;background:#e6e8ec"></div>
<div class="a" style="left:290.30px;top:412.20px;width:148px;text-align:center;font-size:9px;line-height:12px;color:#555;">综合能耗 (kgce)</div>
<div class="a" style="left:438.90px;top:386.80px;width:148px;text-align:center;font-size:9px;line-height:12px;color:#555;">反向无功电能 (kWh)</div>
<div class="a" style="left:438.90px;top:412.20px;width:148px;text-align:center;font-size:9px;line-height:12px;color:#555;">电表单位产品综合能耗 (kWh/台)</div>
<div class="a" style="left:587.50px;top:386.80px;width:148px;text-align:center;font-size:9px;line-height:12px;color:#555;">正向无功电能 (kWh)</div>
<div class="a" style="left:587.50px;top:412.20px;width:148px;text-align:center;font-size:9px;line-height:12px;color:#555;">水 (m<span style="font-size:5.5px;position:relative;top:-3px">3</span>)</div>
<div class="a" style="left:736.10px;top:386.80px;width:148px;text-align:center;font-size:9px;line-height:12px;color:#555;">反向有功电能 (kWh)</div>
<div class="a" style="left:736.10px;top:412.20px;width:148px;text-align:center;font-size:9px;line-height:12px;color:#555;">综合碳排放 (kgCO2)</div>
<div class="a" style="left:884.70px;top:386.80px;width:148px;text-align:center;font-size:9px;line-height:12px;color:#555;">电表产量 (台)</div>
<div class="a" style="left:884.70px;top:412.20px;width:148px;text-align:center;font-size:9px;line-height:12px;color:#555;">电折标量 (kgce)</div>
<div class="a" style="left:290px;top:380px;width:148.60000000000002px;height:25px;border:1px solid #4b96e6"></div>
<svg class="a" style="left:419px;top:380px" width="20" height="20" viewBox="0 0 20 20"><path d="M0 0 L20 0 L20 20 Z" fill="#2f8df0"/><path d="M9 6 L12.5 9.2 L17.5 2.8" stroke="#fff" stroke-width="1.4" fill="none"/></svg>
<svg class="a" style="left:315px;top:386px" width="13" height="13" viewBox="0 0 13 13"><rect x="1" y="8" width="1.6" height="4" fill="#4a9be8"/><rect x="3.8" y="6.5" width="1.6" height="5.5" fill="#4a9be8"/><rect x="6.6" y="7.5" width="1.6" height="4.5" fill="#4a9be8"/><rect x="9.4" y="5" width="1.6" height="7" fill="#4a9be8"/><rect x="0" y="12" width="13" height="1" fill="#4a9be8"/><path d="M1 6 L4.5 3.5 L7 5 L11.5 1" stroke="#4a9be8" stroke-width="1" fill="none"/><circle cx="11.5" cy="1.3" r="1.2" fill="#4a9be8"/></svg>
<div class="a" style="left:333px;top:386.80px;font-size:9px;line-height:12px;color:#555;">正向有功电能 (kWh)</div>
<div class="a" style="left:636px;top:446.80px;font-size:9px;line-height:12px;color:#2d86d8;">显示全部</div>
<div class="a" style="left:679px;top:450px;width:0;height:0;border-left:4px solid transparent;border-right:4px solid transparent;border-top:4.5px solid #2d86d8"></div>
<div class="a" style="left:996px;top:468px;width:39px;height:20px;background:#3d99f5;border-radius:2px"></div>
<div class="a" style="left:915.50px;top:472.60px;width:200px;text-align:center;font-size:8px;line-height:12px;color:#fff;">导出</div>
<div class="a" style="left:287.5px;top:495.5px;width:748.5px;height:190.5px;border:1px solid #f4f6f9;background:#fff"></div>
<div class="a" style="left:396px;top:519px;width:640px;height:25px;background:#f3f7fc"></div>
<div class="a" style="left:288.5px;top:567.67px;width:746.5px;height:23.670000000000073px;background:#f5f8fd"></div>
<div class="a" style="left:288.5px;top:615.01px;width:746.5px;height:23.670000000000073px;background:#f5f8fd"></div>
<div class="a" style="left:288.5px;top:662.35px;width:746.5px;height:23.66999999999996px;background:#f5f8fd"></div>
<div class="a" style="left:396px;top:518.5px;width:640px;height:1.0px;background:#f1f3f7"></div>
<div class="a" style="left:287.5px;top:543.5px;width:748.5px;height:1.0px;background:#f1f3f7"></div>
<div class="a" style="left:287.5px;top:567.17px;width:748.5px;height:1.0px;background:#f6f8fb"></div>
<div class="a" style="left:287.5px;top:590.84px;width:748.5px;height:1.0px;background:#f6f8fb"></div>
<div class="a" style="left:287.5px;top:614.51px;width:748.5px;height:1.0px;background:#f6f8fb"></div>
<div class="a" style="left:287.5px;top:638.18px;width:748.5px;height:1.0px;background:#f6f8fb"></div>
<div class="a" style="left:287.5px;top:661.85px;width:748.5px;height:1.0px;background:#f6f8fb"></div>
<div class="a" style="left:395.5px;top:495.5px;width:1.0px;height:190.5px;background:#f1f3f7"></div>
<div class="a" style="left:523.5px;top:519px;width:1.0px;height:167px;background:#f1f3f7"></div>
<div class="a" style="left:651.5px;top:519px;width:1.0px;height:167px;background:#f1f3f7"></div>
<div class="a" style="left:779.5px;top:519px;width:1.0px;height:167px;background:#f1f3f7"></div>
<div class="a" style="left:907.5px;top:519px;width:1.0px;height:167px;background:#f1f3f7"></div>
<div class="a" style="left:292.00px;top:514.20px;width:100px;text-align:center;font-size:8px;line-height:12px;color:#555;">时间</div>
<div class="a" style="left:616.00px;top:502.60px;width:200px;text-align:center;font-size:8px;line-height:12px;color:#555;">康派智能-正向有功电能(kWh)</div>
<div class="a" style="left:411.20px;top:526.60px;width:100px;text-align:center;font-size:8px;line-height:12px;color:#555;">当期</div>
<div class="a" style="left:539.00px;top:526.60px;width:100px;text-align:center;font-size:8px;line-height:12px;color:#555;">同期</div>
<div class="a" style="left:666.50px;top:526.60px;width:100px;text-align:center;font-size:8px;line-height:12px;color:#555;">同比</div>
<div class="a" style="left:793.50px;top:526.60px;width:100px;text-align:center;font-size:8px;line-height:12px;color:#555;">上期</div>
<div class="a" style="left:921.50px;top:526.60px;width:100px;text-align:center;font-size:8px;line-height:12px;color:#555;">环比</div>
<div class="a" style="left:292.05px;top:550.34px;width:100px;text-align:center;font-size:8.6px;line-height:12px;color:#555;transform:scaleX(0.93)">2021-05</div>
<div class="a" style="left:411.20px;top:550.34px;width:100px;text-align:center;font-size:8.6px;line-height:12px;color:#555;transform:scaleX(0.86)">5912.43</div>
<div class="a" style="left:539.00px;top:550.34px;width:100px;text-align:center;font-size:8.6px;line-height:12px;color:#555;transform:scaleX(0.86)">5912.43</div>
<div class="a" style="left:666.50px;top:550.34px;width:100px;text-align:center;font-size:8.6px;line-height:12px;color:#555;transform:scaleX(0.86)">0.00%</div>
<div class="a" style="left:793.20px;top:550.34px;width:100px;text-align:center;font-size:8.6px;line-height:12px;color:#555;transform:scaleX(0.86)">4015.72</div>
<div class="a" style="left:920.70px;top:550.34px;width:100px;text-align:center;font-size:8.6px;line-height:12px;color:#cc4659;transform:scaleX(0.86)">47.23%</div>
<div class="a" style="left:292.05px;top:574.00px;width:100px;text-align:center;font-size:8.6px;line-height:12px;color:#555;transform:scaleX(0.93)">2021-06</div>
<div class="a" style="left:411.20px;top:574.00px;width:100px;text-align:center;font-size:8.6px;line-height:12px;color:#555;transform:scaleX(0.86)">9038.57</div>
<div class="a" style="left:539.00px;top:574.00px;width:100px;text-align:center;font-size:8.6px;line-height:12px;color:#555;transform:scaleX(0.86)">9038.57</div>
<div class="a" style="left:666.50px;top:574.00px;width:100px;text-align:center;font-size:8.6px;line-height:12px;color:#555;transform:scaleX(0.86)">0.00%</div>
<div class="a" style="left:793.20px;top:574.00px;width:100px;text-align:center;font-size:8.6px;line-height:12px;color:#555;transform:scaleX(0.86)">5912.43</div>
<div class="a" style="left:920.70px;top:574.00px;width:100px;text-align:center;font-size:8.6px;line-height:12px;color:#cc4659;transform:scaleX(0.86)">52.87%</div>
<div class="a" style="left:292.05px;top:597.68px;width:100px;text-align:center;font-size:8.6px;line-height:12px;color:#555;transform:scaleX(0.93)">2021-07</div>
<div class="a" style="left:411.20px;top:597.68px;width:100px;text-align:center;font-size:8.6px;line-height:12px;color:#555;transform:scaleX(0.86)">7922.31</div>
<div class="a" style="left:539.00px;top:597.68px;width:100px;text-align:center;font-size:8.6px;line-height:12px;color:#555;transform:scaleX(0.86)">7922.31</div>
<div class="a" style="left:666.50px;top:597.68px;width:100px;text-align:center;font-size:8.6px;line-height:12px;color:#555;transform:scaleX(0.86)">0.00%</div>
<div class="a" style="left:793.20px;top:597.68px;width:100px;text-align:center;font-size:8.6px;line-height:12px;color:#555;transform:scaleX(0.86)">9038.57</div>
<div class="a" style="left:920.70px;top:597.68px;width:100px;text-align:center;font-size:8.6px;line-height:12px;color:#48a67a;transform:scaleX(0.86)">-12.35%</div>
<div class="a" style="left:292.05px;top:621.35px;width:100px;text-align:center;font-size:8.6px;line-height:12px;color:#555;transform:scaleX(0.93)">2021-08</div>
<div class="a" style="left:411.20px;top:621.35px;width:100px;text-align:center;font-size:8.6px;line-height:12px;color:#555;transform:scaleX(0.86)">8666.44</div>
<div class="a" style="left:539.00px;top:621.35px;width:100px;text-align:center;font-size:8.6px;line-height:12px;color:#555;transform:scaleX(0.86)">8666.44</div>
<div class="a" style="left:666.50px;top:621.35px;width:100px;text-align:center;font-size:8.6px;line-height:12px;color:#555;transform:scaleX(0.86)">0.00%</div>
<div class="a" style="left:793.20px;top:621.35px;width:100px;text-align:center;font-size:8.6px;line-height:12px;color:#555;transform:scaleX(0.86)">7922.31</div>
<div class="a" style="left:920.70px;top:621.35px;width:100px;text-align:center;font-size:8.6px;line-height:12px;color:#cc4659;transform:scaleX(0.86)">9.39%</div>
<div class="a" style="left:292.05px;top:645.02px;width:100px;text-align:center;font-size:8.6px;line-height:12px;color:#555;transform:scaleX(0.93)">2021-09</div>
<div class="a" style="left:411.20px;top:645.02px;width:100px;text-align:center;font-size:8.6px;line-height:12px;color:#555;transform:scaleX(0.86)">6270.65</div>
<div class="a" style="left:539.00px;top:645.02px;width:100px;text-align:center;font-size:8.6px;line-height:12px;color:#555;transform:scaleX(0.86)">6270.65</div>
<div class="a" style="left:666.50px;top:645.02px;width:100px;text-align:center;font-size:8.6px;line-height:12px;color:#555;transform:scaleX(0.86)">0.00%</div>
<div class="a" style="left:793.20px;top:645.02px;width:100px;text-align:center;font-size:8.6px;line-height:12px;color:#555;transform:scaleX(0.86)">8666.44</div>
<div class="a" style="left:920.70px;top:645.02px;width:100px;text-align:center;font-size:8.6px;line-height:12px;color:#48a67a;transform:scaleX(0.86)">-27.64%</div>
<div class="a" style="left:292.05px;top:668.69px;width:100px;text-align:center;font-size:8.6px;line-height:12px;color:#555;transform:scaleX(0.93)">2021-10</div>
<div class="a" style="left:411.20px;top:668.69px;width:100px;text-align:center;font-size:8.6px;line-height:12px;color:#555;transform:scaleX(0.86)">1349.27</div>
<div class="a" style="left:539.00px;top:668.69px;width:100px;text-align:center;font-size:8.6px;line-height:12px;color:#555;transform:scaleX(0.86)">1349.27</div>
<div class="a" style="left:666.50px;top:668.69px;width:100px;text-align:center;font-size:8.6px;line-height:12px;color:#555;transform:scaleX(0.86)">0.00%</div>
<div class="a" style="left:793.20px;top:668.69px;width:100px;text-align:center;font-size:8.6px;line-height:12px;color:#555;transform:scaleX(0.86)">6270.65</div>
<div class="a" style="left:920.70px;top:668.69px;width:100px;text-align:center;font-size:8.6px;line-height:12px;color:#48a67a;transform:scaleX(0.86)">-78.48%</div>
</body></html>
